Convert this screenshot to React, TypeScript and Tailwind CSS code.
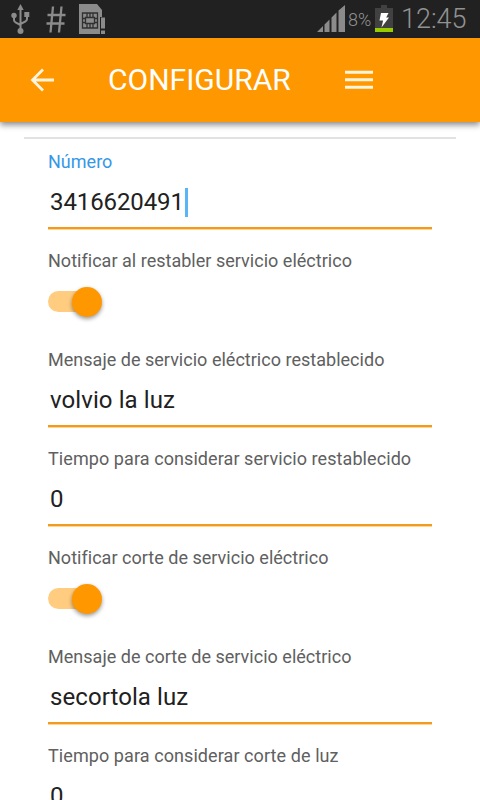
import type { ReactNode } from "react";

function UsbIcon() {
  return (
    <svg width="20" height="30" viewBox="0 0 20 30" fill="none" stroke="#8b8b8b" strokeWidth="2">
      <path d="M9.500 5v20M3 12v4q0 1.500 1.500 2.300l5 2.700M16 10v5q0 1.500-1.500 2.300L9.500 20" />
      <path d="M9.500 0l3.200 6H6.300z" fill="#8b8b8b" stroke="none" />
      <circle cx="3" cy="11.500" r="2.700" fill="#8b8b8b" stroke="none" />
      <path d="M13.300 8h5v5h-5z" fill="#8b8b8b" stroke="none" />
      <circle cx="9.500" cy="27" r="3" fill="#8b8b8b" stroke="none" />
    </svg>
  );
}

function HashIcon() {
  return (
    <svg width="20" height="28" viewBox="0 0 20 28" fill="none" stroke="#8b8b8b" strokeWidth="2.300">
      <path d="M7 1.500L4.500 27.500M15.500 1.500l-2.500 26M1.500 10h18M.5 18.500h18" />
    </svg>
  );
}

function SimIcon() {
  return (
    <svg width="27" height="30" viewBox="0 0 27 30" fill="none">
      <path d="M0 0h18l5 6v7h-2v17H0z" fill="#8b8b8b" />
      <path d="M3.500 9h15v15h-15zM7 14.500H3.500M7 18.500H3.500M18 14.500h-3M18 18.500h-3M8 9v4M11 9v4M14 9v4M8 20v4M11 20v4M14 20v4M6.500 13.500h9v6h-9z" stroke="#303030" strokeWidth="1.300" />
      <path d="M22 13.500h4v11h-4zM22 26.500h4v3.500h-4z" fill="#8b8b8b" />
    </svg>
  );
}

function SignalIcon() {
  return (
    <svg width="28" height="28" viewBox="0 0 28 28">
      <path d="M0 27L6 21v6zM7.500 27v-7.500l5-5V27zM14.500 27V12.500l5-5V27zM21.500 27V5.500L28 0v27z" fill="#8b8b8b" />
    </svg>
  );
}

function BatteryIcon() {
  return (
    <svg width="18" height="27" viewBox="0 0 18 27">
      <path d="M6 0h6v3h6v20H0V3h6z" fill="#414141" />
      <path d="M0 23h18v4H0z" fill="#99cc00" />
      <path d="M6 8h7.500l-2.300 4.500H14L6.500 22.500l1.600-7H4.500z" fill="#fff" />
    </svg>
  );
}

function StatusBar() {
  return (
    <div className="flex h-[38px] bg-[#212121] text-[#929292]">
      <div className="flex flex-1 pl-[11px] pt-1">
        <UsbIcon />
        <div className="ml-[15px] pt-px"><HashIcon /></div>
        <div className="ml-[13px]"><SimIcon /></div>
      </div>
      <div className="flex">
        <div className="pt-[5px]"><SignalIcon /></div>
        <span className="ml-[3px] w-[27px] text-[18px] leading-[40px] font-light">8%</span>
        <div className="pt-[5px]"><BatteryIcon /></div>
        <span className="ml-[8px] w-[79px] whitespace-nowrap text-[27px] leading-[38px] font-light">12:45</span>
      </div>
    </div>
  );
}

function Header() {
  return (
    <header className="flex h-[84px] shrink-0 items-center bg-[#ff9800] text-white shadow-[0_3px_6px_rgba(0,0,0,0.45)]">
      <svg className="ml-[30px]" width="25" height="25" viewBox="0 0 25 25" fill="none" stroke="#fff4dc" strokeWidth="2.800">
        <path d="M13 1.500L2.500 12l10.500 10.500M2.500 12H24" />
      </svg>
      <h1 className="ml-[53px] w-[184px] whitespace-nowrap text-[30px] leading-[36px]">CONFIGURAR</h1>
      <svg className="ml-[53px]" width="28" height="20" viewBox="0 0 28 20" fill="#fff4dc">
        <path d="M0 .7h28v3H0zM0 8.300h28v3H0zM0 15.800h28v3H0z" />
      </svg>
    </header>
  );
}

type FieldProps = { label: string; active?: boolean; wide?: boolean; children: ReactNode };

function Field({ label, active, wide, children }: FieldProps) {
  return (
    <div className="h-[99px] shrink-0">
      <div className={`h-[30px] whitespace-nowrap text-[18px] leading-[32px] ${wide ? "tracking-[0.08px]" : "tracking-[0.02px]"} ${active ? "text-[#3498e8]" : "text-[#606060]"}`}>{label}</div>
      {children}
    </div>
  );
}

function TextValue({ value, cursor }: { value: string; cursor?: boolean }) {
  return (
    <div className="h-[54px] border-b border-[#ffd58f]">
      <div className="flex h-[53px] border-b-2 border-[#f29a1f] pl-[2px] text-[24px] leading-[53px] text-[#212121]">
        <span className={`whitespace-nowrap ${cursor ? "w-[135px] tracking-[-0.1px]" : "tracking-[0.08px]"}`}>{value}</span>
        {cursor && <span className="mt-3 h-[29px] w-[3px] bg-[#5ab4f8]" />}
      </div>
    </div>
  );
}

function Toggle() {
  return (
    <div className="flex h-[53px] items-center">
      <div className="flex h-[21px] w-[51px] items-center rounded-full bg-[#ffcc80] pl-6">
        <div className="h-[30px] w-[30px] shrink-0 rounded-full bg-[#ff9800] shadow-[0_2px_4px_rgba(0,0,0,0.4)]" />
      </div>
    </div>
  );
}

export default function App() {
  return (
    <div className="flex h-[800px] w-[480px] flex-col overflow-hidden bg-white font-[Roboto,sans-serif]">
      <StatusBar />
      <Header />
      <main className="flex min-h-0 flex-1 flex-col px-6 pt-[15px]">
        <div className="h-[2px] shrink-0 bg-[#e2e2e2]" />
        <div className="flex flex-col px-6 pt-[7px]">
          <Field label="Número" active><TextValue value="3416620491" cursor /></Field>
          <Field label="Notificar al restabler servicio eléctrico"><Toggle /></Field>
          <Field label="Mensaje de servicio eléctrico restablecido"><TextValue value="volvio la luz" /></Field>
          <Field label="Tiempo para considerar servicio restablecido" wide><TextValue value="0" /></Field>
          <Field label="Notificar corte de servicio eléctrico"><Toggle /></Field>
          <Field label="Mensaje de corte de servicio eléctrico"><TextValue value="secortola luz" /></Field>
          <Field label="Tiempo para considerar corte de luz" wide><TextValue value="0" /></Field>
        </div>
      </main>
    </div>
  );
}
